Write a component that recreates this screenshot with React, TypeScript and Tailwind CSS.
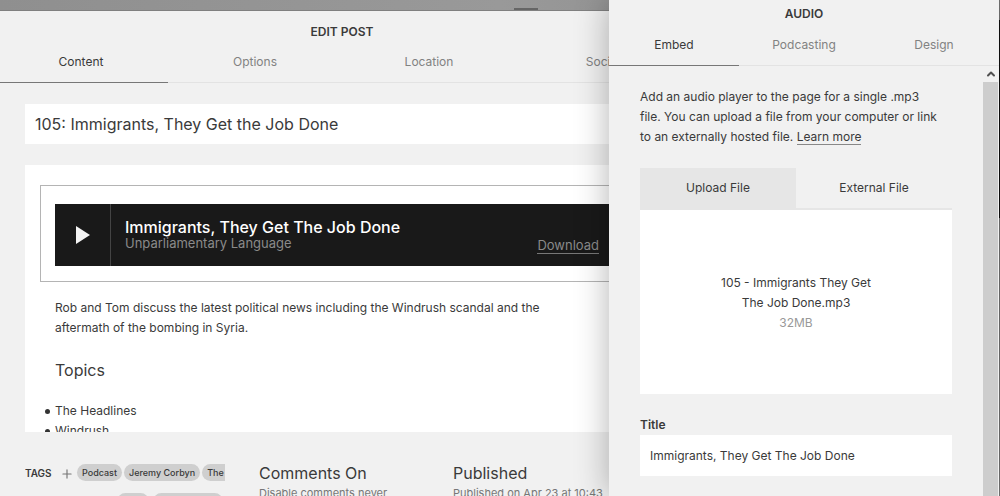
import { useState } from 'react';
import { ChevronUp, Plus } from 'lucide-react';

const POST_TABS = ['Content', 'Options', 'Location', 'Social'];
const AUDIO_TABS = ['Embed', 'Podcasting', 'Design'];
const TAGS = ['Podcast', 'Jeremy Corbyn', 'The Headlines'];
const TOPICS = ['The Headlines', 'Windrush'];

interface TabBarProps {
  tabs: string[];
  active: string;
  onSelect: (tab: string) => void;
}

function TabBar({ tabs, active, onSelect }: TabBarProps) {
  return (
    <nav className="flex h-[42px] shrink-0 border-b border-[#e3e3e3]">
      {tabs.map((tab) => (
        <button
          key={tab}
          type="button"
          onClick={() => onSelect(tab)}
          className={`-mb-px flex-1 border-b text-[12px] leading-[41px] ${
            tab === active ? 'border-[#777] text-[#3a3a3a]' : 'border-transparent text-[#828282]'
          }`}
        >
          {tab}
        </button>
      ))}
    </nav>
  );
}

function AudioPlayer() {
  return (
    <div className="border border-[#b4b4b4] px-3.5 pt-[18px] pb-[15px]">
      <div className="flex h-[62px] bg-[#191919]">
        <button type="button" aria-label="Play" className="flex w-14 items-center justify-center border-r border-[#444]">
          <svg width="14" height="18" viewBox="0 0 14 18" aria-hidden="true">
            <path d="M0 0 14 9 0 18Z" fill="#f4f4f4" />
          </svg>
        </button>
        <div className="flex flex-1 flex-col justify-center pl-3.5">
          <div className="text-[16px] leading-4 font-medium text-white">Immigrants, They Get The Job Done</div>
          <div className="text-[13px] leading-4 text-[#8a8a8a]">Unparliamentary Language</div>
        </div>
        <a href="#download" className="mr-[30px] mb-3 self-end border-b border-[#777] text-[13px] leading-4 text-[#8a8a8a]">
          Download
        </a>
      </div>
    </div>
  );
}

function EditPost() {
  const [tab, setTab] = useState('Content');
  const [title, setTitle] = useState('105: Immigrants, They Get the Job Done');

  return (
    <section className="-mr-[81px] -ml-1.5 flex min-h-0 flex-1 flex-col bg-[#f1f1f1]">
      <h1 className="pt-[11px] text-center text-[12px] leading-[19px] font-semibold">EDIT POST</h1>
      <TabBar tabs={POST_TABS} active={tab} onSelect={setTab} />

      <div className="flex min-h-0 flex-1 flex-col pt-[21px] pr-[31px] pl-[31px]">
        <input
          aria-label="Post title"
          value={title}
          onChange={(e) => setTitle(e.target.value)}
          className="h-10 w-full shrink-0 bg-white px-2.5 text-[16px] outline-none"
        />

        {/* Post body */}
        <div className="mt-[21px] min-h-0 flex-1 overflow-hidden bg-white px-[15px] pt-5">
          <AudioPlayer />
          <div className="px-[15px] pt-4 text-[12px] leading-5">
            <p className="max-w-[520px]">
              Rob and Tom discuss the latest political news including the Windrush scandal and the aftermath of the
              bombing in Syria.
            </p>
            <h2 className="pt-5 text-[16px] leading-6">Topics</h2>
            <ul className="list-none pt-[19px]">
              {TOPICS.map((topic) => (
                <li key={topic} className="-ml-2.5 flex items-center gap-[5px]">
                  <span className="size-[5px] rounded-full bg-[#333]" />
                  {topic}
                </li>
              ))}
            </ul>
          </div>
        </div>

        {/* Post meta */}
        <footer className="flex h-16 shrink-0 overflow-hidden pt-8">
          <div className="flex w-[200px] shrink-0 overflow-hidden">
            <span className="w-[35px] shrink-0 text-[10px] leading-[18px] font-semibold">TAGS</span>
            <button type="button" aria-label="Add tag" className="flex h-[19px] w-[17px] shrink-0 items-center text-[#777]">
              <Plus size={14} strokeWidth={2} />
            </button>
            <div className="shrink-0">
              <div className="flex gap-0.5">
                {TAGS.map((tag) => (
                  <span key={tag} className="rounded-full bg-[#cfcfcf] px-[5px] text-[9px] leading-[17px] font-medium whitespace-nowrap">
                    {tag}
                  </span>
                ))}
              </div>
              <div className="mt-3 ml-10 flex gap-1">
                <span className="h-[17px] w-8 rounded-full bg-[#cfcfcf]" />
                <span className="h-[17px] w-[70px] rounded-full bg-[#cfcfcf]" />
              </div>
            </div>
          </div>
          <div className="ml-[34px] w-[194px] shrink-0">
            <div className="text-[16px] leading-[19px]">Comments On</div>
            <div className="text-[11px] leading-5 text-[#777]">Disable comments never</div>
          </div>
          <div className="flex-1 whitespace-nowrap">
            <div className="text-[16px] leading-[19px]">Published</div>
            <div className="text-[11px] leading-5 text-[#777]">Published on Apr 23 at 10:43</div>
          </div>
        </footer>
      </div>
    </section>
  );
}

function AudioPanel() {
  const [tab, setTab] = useState('Embed');
  const [title, setTitle] = useState('Immigrants, They Get The Job Done');

  return (
    <aside className="z-10 flex w-[390px] shrink-0 flex-col bg-[#f1f1f1] shadow-[0_0_32px_rgba(0,0,0,0.3)]">
      <h2 className="pt-1 text-center text-[12px] leading-5 font-semibold">AUDIO</h2>
      <TabBar tabs={AUDIO_TABS} active={tab} onSelect={setTab} />

      <div className="flex min-h-0 flex-1">
        <div className="flex-1 overflow-hidden pt-[21px] pr-[31px] pl-[31px] text-[12px]">
          <p className="max-w-[301px] leading-5">
            Add an audio player to the page for a single .mp3 file. You can upload a file from your computer or link to
            an externally hosted file.{' '}
            <a href="#learn-more" className="border-b border-[#888]">
              Learn more
            </a>
          </p>

          <div className="mt-[21px] flex h-[42px] border-b-2 border-[#e6e6e6]">
            <button type="button" className="flex-1 bg-[#e6e6e6]">
              Upload File
            </button>
            <button type="button" className="flex-1">
              External File
            </button>
          </div>
          <div className="flex h-[184px] flex-col items-center justify-center bg-white pt-0.5 text-center leading-5">
            <div className="w-40">105 - Immigrants They Get The Job Done.mp3</div>
            <div className="text-[#999]">32MB</div>
          </div>

          <label htmlFor="audio-title" className="mt-[21px] block leading-5 font-semibold">
            Title
          </label>
          <input
            id="audio-title"
            value={title}
            onChange={(e) => setTitle(e.target.value)}
            className="h-[41px] w-full bg-white px-2.5 outline-none"
          />
        </div>

        {/* Scrollbar */}
        <div className="mr-px flex w-[15px] shrink-0 flex-col">
          <div className="flex h-4 items-center justify-center">
            <ChevronUp size={12} strokeWidth={4} className="text-[#505050]" />
          </div>
          <div className="flex-1 bg-[#cdcdcd]" />
        </div>
      </div>
    </aside>
  );
}

export default function App() {
  return (
    <div className="flex h-screen overflow-hidden bg-linear-to-r from-[#8f8f8f] via-[#999] to-[#858585] font-['Inter',sans-serif] text-[#3a3a3a]">
      <main className="flex min-w-0 flex-1 flex-col overflow-hidden">
        <div className="flex h-[11px] shrink-0 items-end border-b border-[#808080]">
          <div className="mr-[71px] ml-auto h-0.5 w-6 bg-[#666]" />
        </div>
        <EditPost />
      </main>
      <AudioPanel />
      <div className="flex w-px shrink-0 flex-col bg-[#777]">
        <div className="mt-5 h-[198px] bg-[#111]" />
      </div>
    </div>
  );
}
